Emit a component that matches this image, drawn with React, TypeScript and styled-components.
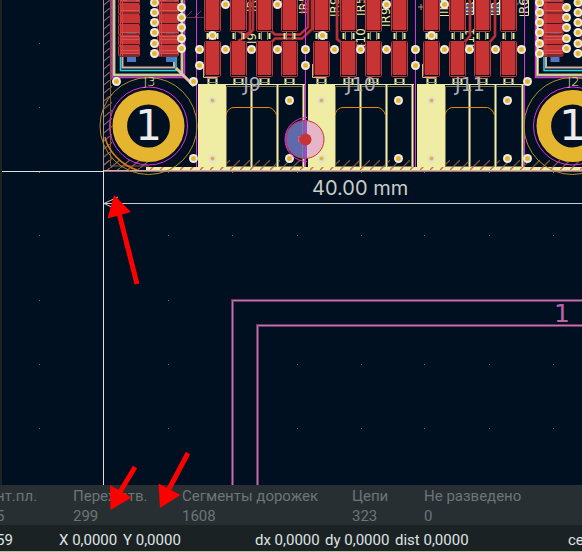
import React from "react";
import styled, { createGlobalStyle } from "styled-components";

const GlobalStyle = createGlobalStyle`
  body { margin: 0; background: #1b2224; font-family: Roboto, "Liberation Sans", sans-serif; }
  * { box-sizing: border-box; }
`;

const Editor = styled.main`
  position: relative;
  display: flex;
  flex-direction: column;
  min-height: 100vh;
  overflow: hidden;
  border-bottom: 1px solid #b4c49a;
`;
const BoardCanvas = styled.svg`
  display: block;
  width: 100%;
  flex: 1 0 485px;
  background: #001020;
  border-left: 2px solid #1a2528;
`;
const Statistics = styled.dl`
  display: grid;
  grid-template-columns: 73px 109px 170px 72px 1fr;
  height: 40px;
  margin: 0;
  overflow: hidden;
  background: #272f33;
  color: #6c7577;
  font-size: 15px;
  line-height: 20px;
  white-space: nowrap;
`;
const Statistic = styled.div<{ $clipped?: boolean }>`
  padding-top: 1px;
  margin-left: ${(p) => (p.$clipped ? "-4px" : "0")};
  dt, dd { margin: 0; }
`;
const StatusBar = styled.footer`
  display: grid;
  grid-template-columns: 59px 64px 132px 70px 70px 173px 1fr;
  height: 26px;
  overflow: hidden;
  background: #1b2224;
  color: #dfe4e3;
  font-size: 15px;
  line-height: 30px;
  white-space: nowrap;
`;
const Field = styled.span<{ $clipped?: boolean }>`
  margin-left: ${(p) => (p.$clipped ? "-4px" : "0")};
`;
const Annotations = styled.svg`
  position: absolute;
  inset: 0;
  width: 100%;
  height: 100%;
  pointer-events: none;
`;

const RED = "#c83434";
const YELLOW = "#efeca4";
const MAGENTA = "#e42be0";
const GOLD = "#e6b530";
const SANS = '"DejaVu Sans", sans-serif';
const NAVY = "#001020";

type Point = [number, number];

const Via = ({ x, y, faint }: { x: number; y: number; faint?: boolean }) => (
  <g>
    <circle cx={x} cy={y} r={faint ? 4 : 4.5} fill={faint ? "#e2e0d8" : "#ecebe8"} />
    <circle cx={x} cy={y} r={faint ? 2 : 2.5} fill={GOLD} />
  </g>
);

const Pad = ({ x, y, height }: { x: number; y: number; height: number }) => (
  <g>
    <rect x={x + 0.5} y={y + 0.5} width="16" height={height - 1} rx="1" fill={NAVY} stroke={RED} />
    <rect x={x + 2} y={y + 1} width="13" height={height - 3} fill={RED} />
    <path d={`M${x + 1.5} ${y + 2}V${y + height - 3}M${x + 15.5} ${y + 2}V${y + height - 3}`} stroke="#4e222f" />
  </g>
);

const PadLegs = ({ x }: { x: number }) => (
  <g fill="none" stroke={YELLOW}>
    <path d={`M${x + 3.5} 33v6M${x + 13.5} 33v6`} strokeWidth="2" />
    <path d={`M${x + 5.5} 32v8M${x + 11.5} 32v8`} stroke="#8d8c67" />
    <path d={`M${x + 4.5} 78v6M${x + 12.5} 78v6`} strokeWidth="2" />
    <path d={`M${x + 4} 78.5h9M${x + 3} 82.5h11`} stroke="#8d8c67" />
  </g>
);

const Pads = ({ xs }: { xs: number[] }) => (
  <g>
    {xs.map((x) => (
      <g key={x}>
        <PadLegs x={x} />
        <Pad x={x} y={-6} height={38} />
        <Pad x={x} y={41} height={36} />
      </g>
    ))}
    <path d={`M${xs[0] - 0.5} 64v13.5h14`} fill="none" stroke="#c4c189" />
  </g>
);

const Connector = ({ x, right, pins, end }: { x: number; right: number; pins: number[]; end: number }) => (
  <g>
    <rect x={x} y="84" width={end - x} height="83" fill={NAVY} />
    <path d={`M${right} 160h${end - right}v7h-${end - right}z`} fill="url(#hatch)" />
    <rect x={x} y="84" width={right - x} height="84" fill={YELLOW} />
    <path d={`M${x} 84.5H${end}`} stroke={YELLOW} />
    <path d={`M${right + 0.5} 167V86.5H${end - 3}M${right} 166.5H${end}`} fill="none" stroke="#77755d" />
    {pins.map((pin) => (
      <g key={pin}>
        <path d={`M${pin} 85V167`} stroke="#85846b" strokeWidth="3" />
        <path d={`M${pin} 85V167`} stroke={YELLOW} />
      </g>
    ))}
    <path d={`M${right + 0.5} 115V113Q${right + 3} 107.5 ${right + 8} 107.5H${pins[1] - 8}Q${pins[1] - 3} 109 ${pins[1] - 1} 115`} fill="none" stroke="#e38b09" />
    <Via x={right - 13.5} y={100.5} faint />
    <Via x={right - 13.5} y={158.5} faint />
    <Via x={pins[1] + 12} y={100.5} />
    <Via x={pins[1] + 12} y={158.5} />
  </g>
);

const ChipColumn = ({ x }: { x: number }) => (
  <g>
    <rect x={x + 9} y="55" width="9" height="7" fill="#4c79c5" />
    <rect x={x + 1} y="-4" width="20" height="61" fill="#3c1c2b" />
    {[-7, 3.5, 14, 24.5, 35, 45.5].map((y) => (
      <g key={y}>
        <rect x={x + 2} y={y} width="19" height="9" fill={RED} />
        <rect x={x + 0.5} y={y + 0.5} width="21" height="10" rx="1" fill="none" stroke={RED} />
      </g>
    ))}
    {[0, 10, 32, 36, 39, 50, 53].map((y) => (
      <path key={y} d={`M${x + 2} ${y + 0.5}h19`} stroke="#d35450" />
    ))}
    <path d={`M${x + 9} 0h9M${x + 9} 33.5h9`} stroke="#5d526f" />
    <path d={`M${x + 2.5} 0V56M${x + 4.5} 0V56`} stroke="#d04444" />
  </g>
);

const Chip = ({ x, leftVias }: { x: number; leftVias?: boolean }) => (
  <g>
    <g fill="none">
      <path d={`M${x} 0V77.5H${x + 72.5}V0`} stroke={MAGENTA} strokeWidth="1.5" />
      <path d={`M${x + 2} 0V75H${x + 70}V0`} stroke="#aaa985" strokeWidth="3" />
      <path d={`M${x + 2} 0V75H${x + 70}V0`} stroke={YELLOW} />
      <path d={`M${x + 8.5} 0V70.5H${x + 64}V0`} stroke="#12dfea" strokeWidth="1.5" />
      <path d={`M${x + 10.5} 0V67.5H${x + 62}V0`} stroke="#d9a9a2" strokeWidth="2" />
    </g>
    <ChipColumn x={x + 6} />
    <ChipColumn x={x + 45} />
    {[2.5, 12.5, 22.5, 32.5, 43.5, 53.5].map((y) => (
      <React.Fragment key={y}>
        <Via x={x + 42.5} y={y} />
        {leftVias && <Via x={x + 4} y={y} />}
      </React.Fragment>
    ))}
    {[7.5, 17.5, 27.5, 38.5, 48.5].map((y) => (
      <React.Fragment key={y}>
        {leftVias ? <Via x={x + 31} y={y} /> : <Via x={x + 69.5} y={y} />}
      </React.Fragment>
    ))}
  </g>
);

const MountingHole = ({ x, label }: { x: number; label: string }) => (
  <g>
    <circle cx={x} cy="126" r="48.5" fill="none" stroke="#b58d27" />
    <circle cx={x} cy="126" r="39" fill="none" stroke={MAGENTA} />
    <circle cx={x} cy="126" r="28.7" fill="none" stroke={GOLD} strokeWidth="14.6" />
    <text x={x} y="140" textAnchor="middle" fontFamily={SANS} fontSize="42" fill="#ececec">1</text>
    <text x={x + 1} y="86" textAnchor="middle" fontFamily={SANS} fontWeight="200" fontSize="13" fill={YELLOW}>{label}</text>
  </g>
);

const Silk = ({ x, y, children }: { x: number; y: number; children: string }) => (
  <text transform={`translate(${x} ${y}) rotate(-90)`} fontFamily={SANS} fontSize="12" fill={YELLOW}>{children}</text>
);

const vias: Point[] = [
  [225.5, 4.5], [277.5, 4.5], [212.5, 35.5], [199.5, 49.5], [225.5, 49.5], [251.5, 49.5],
  [277.5, 49.5], [199.5, 65.5], [305.5, 49.5], [305.5, 65.5],
  [386.5, 4.5], [322.5, 35.5], [334.5, 49.5], [360.5, 49.5], [386.5, 49.5], [415.5, 49.5], [415.5, 65.5],
  [444.5, 4.5], [431.5, 35.5], [444.5, 49.5], [469.5, 49.5], [495.5, 49.5], [521.5, 49.5],
  [527.5, 81.5], [527.5, 158.5], [116.5, 81.5], [193.5, 81.5], [193.5, 158.5],
];
const gridX = [39, 103, 168, 232, 297, 361, 424, 489, 553];
const gridY = [43, 107, 172, 235, 300, 364, 428];
const traces = [
  "M238 41L246 37L253 30V0", "M238 31L245 35L250 32V0",
  "M271 31L275 34.5H300L308 27V0", "M271 43L275 38.5H302L312 29V0",
  "M337 0V39L342 43", "M470 0V36L464 43", "M495 0V36L489 43",
];

const Board = () => (
  <BoardCanvas role="img" aria-label="Printed circuit board layout">
    <defs>
      <pattern id="hatch" width="10" height="10" patternUnits="userSpaceOnUse">
        <path d="M-2 12L12 -2" stroke="#80502f" strokeWidth="1.3" />
      </pattern>
      <pattern id="edgeHatch" width="10" height="8" patternUnits="userSpaceOnUse">
        <path d="M0 8L10 0" stroke="#875b55" strokeWidth="1.3" />
      </pattern>
      <pattern id="stripHatch" width="10" height="10" patternUnits="userSpaceOnUse">
        <path d="M-2 12L12 -2" stroke="#d26a4f" strokeWidth="1.5" />
      </pattern>
    </defs>
    <g transform="translate(-2 0)">
      {gridX.map((x) => gridY.map((y) => (
        <rect key={`${x}-${y}`} x={x} y={y} width="1" height="1" fill="#69747c" />
      )))}

      <rect x="104" y="0" width="8" height="170" fill="url(#edgeHatch)" />
      <path d="M103.5 0V171" stroke="#a98c8d" />
      <path d="M110.5 0V166H149" fill="none" stroke="#885622" />
      <rect x="104" y="160" width="44" height="10" fill="url(#edgeHatch)" />
      <path d="M105 137C108 151 121 165 137 170" fill="none" stroke="#e47814" strokeWidth="1.5" />

      <Chip x={112} />
      <Chip x={535.5} leftVias />
      <path d="M176 68L194 86" stroke="#e2c0aa" strokeWidth="3" />
      <path d="M186 17.5h18M186 17l6-6M195 17l6-6" stroke="#75343f" fill="none" />

      <g fill="#1d62a5">
        <rect x="463" y="3" width="12" height="11" />
        <rect x="489" y="3" width="12" height="11" />
        <path d="M501 6h12l6-4v2l-5 4h-13z" />
      </g>
      <path d="M464 3v9" stroke="#12dfea" />
      <path d="M439.5 15.5h11V0M449.5 0V12M463.5 14.5h10V0M489.5 14.5h10V0M519.5 15.5h9V0" fill="none" stroke={YELLOW} />
      <Silk x={256} y={12}>IR5</Silk>
      <Silk x={308} y={14}>IR5</Silk>
      <Silk x={339} y={17}>IR9</Silk>
      <Silk x={365} y={16}>IR5</Silk>
      <Silk x={390} y={27}>IR9</Silk>
      <Silk x={448} y={14}>IR6</Silk>
      <Silk x={474} y={13}>IR6</Silk>
      <Silk x={500} y={13}>IR6</Silk>
      <Silk x={528} y={14}>R6</Silk>
      <Silk x={256} y={44}>J9</Silk>
      <Silk x={365} y={47}>J10</Silk>
      <Silk x={474} y={47}>J11</Silk>

      <g fill="none" stroke="#7e2630" strokeWidth="3">
        {traces.map((d) => <path key={d} d={d} />)}
      </g>
      <g fill="none" stroke={RED}>
        {traces.map((d) => <path key={d} d={d} strokeWidth="1.6" />)}
        <path d="M302 14V2h4v9h-4M361 0h4v4" />
      </g>
      <Pads xs={[204, 230, 256, 281]} />
      <Pads xs={[313, 340, 365, 391]} />
      <Pads xs={[423, 449, 474, 500]} />
      <path d="M418 7h5M421 4v6" stroke="#b08d8a" />

      <Connector x={198} right={226} pins={[251.5, 277.5, 303.5]} end={305} />
      <Connector x={308} right={335} pins={[360.5, 386.5, 412.5]} end={414} />
      <Connector x={417} right={445} pins={[469.5, 495.5, 522.5]} end={524} />
      {[196.5, 305.5, 415.5, 524.5].map((x) => (
        <path key={x} d={`M${x} 0V167`} stroke={MAGENTA} />
      ))}

      <rect x="146" y="167" width="436" height="3" fill={YELLOW} />
      <rect x="146" y="167" width="436" height="3" fill="url(#stripHatch)" />
      <rect x="524" y="160" width="58" height="7" fill="url(#hatch)" />
      <path d="M104 170.5H582" stroke="#e2a89e" />
      <path d="M104 171.5H582" stroke="#817c80" />
      <path d="M0 171.5H104M103.5 170V485" stroke="#dce0e2" />

      <MountingHole x={148.5} label="J3" />
      <MountingHole x={572.5} label="J2" />
      {vias.map(([x, y]) => <Via key={`${x}-${y}`} x={x} y={y} />)}

      <g fontFamily={SANS} fontSize="19" fill="#aeadb4" textAnchor="middle">
        <text x="252" y="91">J9</text>
        <text x="361" y="91">J10</text>
        <text x="470" y="91">J11</text>
      </g>

      <circle cx="305" cy="139.5" r="19" fill="#e6b5c8" />
      <path d="M307 120.7A19 19 0 1 0 307 158.3z" fill="#6069aa" />
      <path d="M302.5 121V158M305.5 121V158" stroke="#a06ab3" />
      <circle cx="305" cy="139.5" r="19" fill="none" stroke={RED} />
      <path d="M307 117.5A22 22 0 0 0 307 161.5" fill="none" stroke={MAGENTA} />
      <path d="M305.5 117V165" stroke={MAGENTA} />
      <rect x="298.5" y="136.5" width="5" height="5" fill="none" stroke="#d6579c" />
      <circle cx="305.5" cy="139.5" r="6" fill={RED} />

      <path d="M104 203.5H582M118 197L104 203.5L118 210" fill="none" stroke="#c7cccd" />
      <text x="312" y="195" fontFamily="Inter, sans-serif" fontSize="20" fill="#c9cdc8">40.00 mm</text>

      <g fill="none">
        <path d="M232.5 485V300.5H584M257.5 485V325.5H584" stroke="#693c66" strokeWidth="3" />
        <path d="M232.5 485V300.5H584M257.5 485V325.5H584" stroke="#c86db0" />
      </g>
      <text x="562" y="322" textAnchor="middle" fontFamily={SANS} fontSize="25" fill="#b964a5">1</text>
    </g>
  </BoardCanvas>
);

const statistics = [
  ["нт.пл.", "5"], ["Перех.отв.", "299"], ["Сегменты дорожек", "1608"], ["Цепи", "323"], ["Не разведено", "0"],
];
const coordinates = ["59", "X 0,0000", "Y 0,0000", "dx 0,0000", "dy 0,0000", "dist 0,0000", "се"];

export default function App() {
  return (
    <>
      <GlobalStyle />
      <Editor>
        <Board />
        <Statistics>
          {statistics.map(([label, value], i) => (
            <Statistic key={label} $clipped={i === 0}>
              <dt>{label}</dt>
              <dd>{value}</dd>
            </Statistic>
          ))}
        </Statistics>
        <StatusBar>
          {coordinates.map((text, i) => <Field key={text} $clipped={i === 0}>{text}</Field>)}
        </StatusBar>
        <Annotations aria-hidden="true">
          <g fill="#ff0000" stroke="#ff0000">
            <path d="M137 284L119 213M135 467L120 492M188 453L169 489" strokeWidth="5" />
            <path d="M114 195L107.5 218.5L131 212zM110.5 510L110 485L131.5 497.5zM160 508L158.5 483.5L180.5 495z" stroke="none" />
          </g>
        </Annotations>
      </Editor>
    </>
  );
}
